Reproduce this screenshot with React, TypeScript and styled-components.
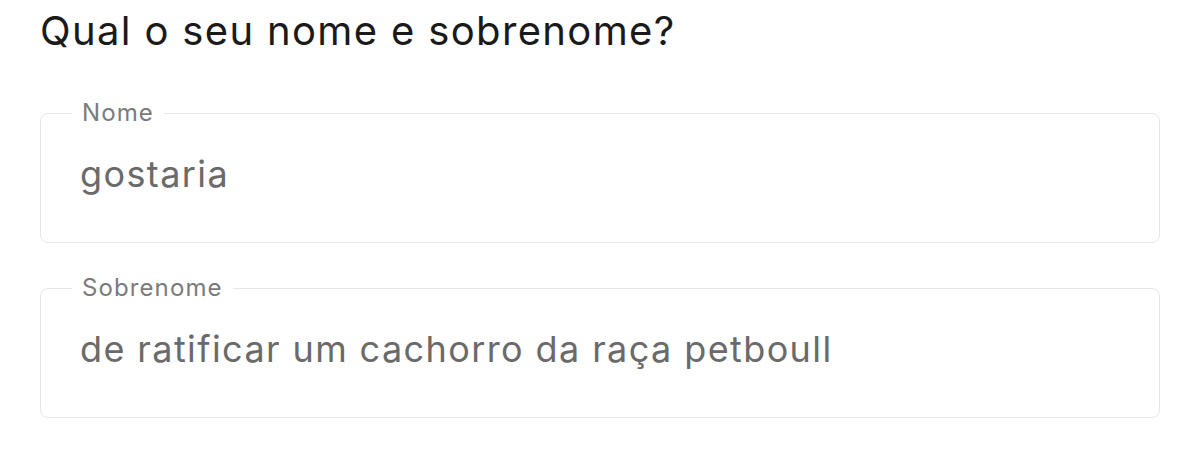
import { createGlobalStyle } from "styled-components";
import styled from "styled-components";

const GlobalStyle = createGlobalStyle`
  html, body {
    margin: 0;
    padding: 0;
    background: #ffffff;
  }
  body {
    font-family: Inter, "Open Sans", sans-serif;
  }
`;

const Page = styled.main`
  width: 1200px;
  height: 452px;
  box-sizing: border-box;
  padding: 5px 40px 0 40px;
  display: flex;
  flex-direction: column;
`;

const Question = styled.h1`
  margin: 0 0 42px 0;
  font-size: 40px;
  font-weight: 400;
  line-height: 52px;
  letter-spacing: 1.35px;
  color: #1a1a1a;
`;

const Fields = styled.div`
  display: flex;
  flex-direction: column;
  gap: 31px;
`;

const Field = styled.fieldset`
  margin: 0;
  height: 144px;
  box-sizing: border-box;
  padding: 0 31px;
  border: 1.5px solid #e6e6e6;
  border-radius: 8px;
`;

const Legend = styled.legend`
  padding: 0 10px;
  font-size: 24px;
  line-height: 28px;
  letter-spacing: 1.1px;
  color: #7b7b7b;
`;

const Value = styled.input`
  display: block;
  width: 100%;
  box-sizing: border-box;
  height: 44px;
  border: none;
  outline: none;
  padding: 0 0 0 8px;
  margin-top: 25px;
  font-family: inherit;
  font-size: 36px;
  line-height: 44px;
  letter-spacing: 1.4px;
  color: #6a6a6a;
  background: transparent;
`;

export default function App() {
  return (
    <>
      <GlobalStyle />
      <Page>
        <Question>Qual o seu nome e sobrenome?</Question>
        <Fields>
          <Field>
            <Legend>Nome</Legend>
            <Value defaultValue="gostaria" />
          </Field>
          <Field>
            <Legend>Sobrenome</Legend>
            <Value defaultValue="de ratificar um cachorro da raça petboull" />
          </Field>
        </Fields>
      </Page>
    </>
  );
}
